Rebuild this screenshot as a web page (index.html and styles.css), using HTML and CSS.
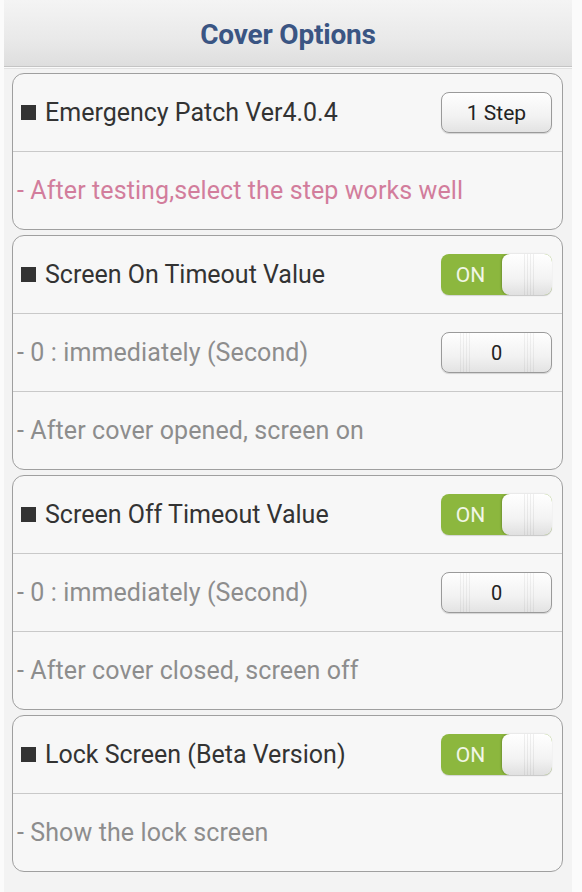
FILE: index.html
```html
<!DOCTYPE html>
<html>
<head>
<meta charset="utf-8">
<link rel="stylesheet" href="styles.css">
</head>
<body>
<div class="app">
  <header class="topbar"><h1 class="title">Cover Options</h1></header>
  <main class="list">
    <section class="card">
      <div class="row">
        <span class="label"><i class="bullet"></i>Emergency Patch Ver4.0.4</span>
        <button class="btn">1 Step</button>
      </div>
      <div class="row desc"><span class="pink">- After testing,select the step works well</span></div>
    </section>
    <section class="card">
      <div class="row">
        <span class="label"><i class="bullet"></i>Screen On Timeout Value</span>
        <div class="toggle"><span class="on">ON</span><span class="knob"></span></div>
      </div>
      <div class="row desc">
        <span>- 0 : immediately (Second)</span>
        <button class="btn grip">0</button>
      </div>
      <div class="row desc"><span>- After cover opened, screen on</span></div>
    </section>
    <section class="card">
      <div class="row">
        <span class="label"><i class="bullet"></i>Screen Off Timeout Value</span>
        <div class="toggle"><span class="on">ON</span><span class="knob"></span></div>
      </div>
      <div class="row desc">
        <span>- 0 : immediately (Second)</span>
        <button class="btn grip">0</button>
      </div>
      <div class="row desc"><span>- After cover closed, screen off</span></div>
    </section>
    <section class="card">
      <div class="row">
        <span class="label"><i class="bullet"></i>Lock Screen (Beta Version)</span>
        <div class="toggle"><span class="on">ON</span><span class="knob"></span></div>
      </div>
      <div class="row desc"><span>- Show the lock screen</span></div>
    </section>
  </main>
</div>
</body>
</html>
```

FILE: styles.css
```css
html, body {
  margin: 0;
  padding: 0;
  background: #fbfbfb;
  height: 100%;
}
body {
  font-family: Roboto, "Liberation Sans", sans-serif;
}
.app {
  width: 568px;
  margin-left: 4px;
  min-height: 892px;
  background: #f3f3f3;
}
.topbar {
  height: 67px;
  box-sizing: border-box;
  padding-top: 3px;
  background: linear-gradient(#f4f4f4, #e9e9e9 60%, #dedede);
  border-bottom: 1px solid #c4c4c4;
  box-shadow: 0 1px 0 #fafafa, 0 2px 0 #e2e2e2;
  display: flex;
  align-items: center;
  justify-content: center;
}
.title {
  margin: 0;
  font-size: 28px;
  font-weight: 700;
  color: #3a5583;
  letter-spacing: -0.2px;
}
.list {
  display: flex;
  flex-direction: column;
  gap: 5px;
  padding: 6px 9px 0 8px;
}
.card {
  background: #f7f7f7;
  border: 1px solid #9f9f9f;
  border-radius: 12px;
  overflow: hidden;
}
.row {
  height: 77px;
  display: flex;
  align-items: center;
  justify-content: space-between;
  padding: 0 10px 0 8px;
  font-size: 25px;
  color: #333;
}
.row + .row {
  border-top: 1px solid #c9c9c9;
}
.row.desc {
  padding-left: 4px;
  color: #8d8d8d;
  letter-spacing: 0.1px;
}
.pink {
  color: #d27d9c;
}
.label {
  display: flex;
  align-items: center;
}
.bullet {
  display: inline-block;
  width: 15px;
  height: 15px;
  background: #333;
  margin-right: 9px;
}
.btn {
  width: 111px;
  height: 41px;
  border: 1px solid #9a9a9a;
  border-radius: 8px;
  background: linear-gradient(#fefefe, #f2f2f2 60%, #e3e3e3);
  box-shadow: 0 1px 1px rgba(0,0,0,0.15);
  font-family: Roboto, "Liberation Sans", sans-serif;
  font-size: 21px;
  color: #222;
  padding: 0;
}
.btn.grip {
  font-size: 20px;
  background:
    repeating-linear-gradient(90deg, transparent 0 2px, rgba(0,0,0,0.05) 2px 3px) 16px 0 / 14px 100% no-repeat,
    repeating-linear-gradient(90deg, transparent 0 2px, rgba(0,0,0,0.05) 2px 3px) 80px 0 / 14px 100% no-repeat,
    linear-gradient(#fefefe, #f2f2f2 60%, #e3e3e3);
}
.toggle {
  width: 111px;
  height: 41px;
  border-radius: 8px;
  background: #8cb73e;
  box-sizing: border-box;
  display: flex;
  align-items: stretch;
  box-shadow: 0 1px 1px rgba(0,0,0,0.15);
}
.on {
  flex: 1;
  display: flex;
  align-items: center;
  justify-content: center;
  font-size: 21px;
  color: #f1f6e6;
  padding-right: 2px;
}
.knob {
  width: 50px;
  border-radius: 8px;
  background:
    repeating-linear-gradient(90deg, transparent 0 2px, rgba(0,0,0,0.06) 2px 3px) 20px 0 / 12px 100% no-repeat,
    linear-gradient(#ffffff, #f3f3f3 60%, #e0e0e0);
  box-shadow: -1px 0 2px rgba(0,0,0,0.2);
}
```
